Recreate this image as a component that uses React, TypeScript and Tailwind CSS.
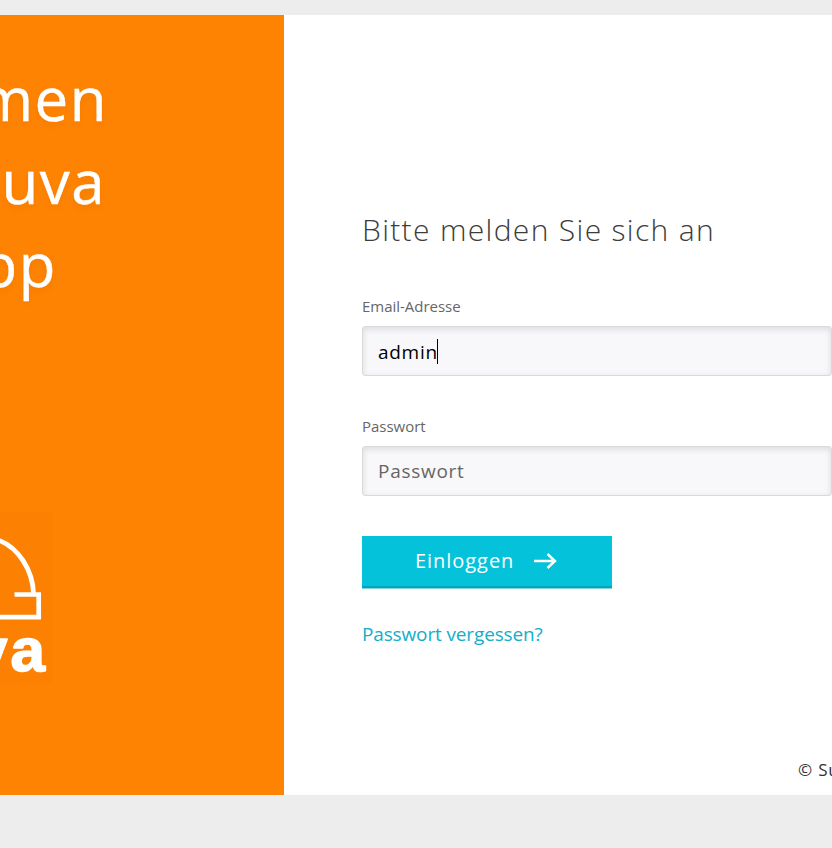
import React from "react";

const headline = [
  { text: "men", pad: "pr-[176px]" },
  { text: "uva", pad: "pr-[178px]" },
  { text: "pp", pad: "pr-[227px]" },
];

function Logo() {
  return (
    <div className="mt-[206px] h-[172px] w-[53px] overflow-hidden bg-[#fc8002]">
      <svg width="53" height="172" viewBox="0 512 53 172" fill="none" stroke="#fff" className="block">
        <path d="M-2 540C18 547 33 570 33.5 594" strokeWidth="4.8" />
        <path d="M14.5 594.5H38.7V617.2H-2" strokeWidth="4.7" />
        <g
          fill="#fff"
          strokeWidth="1.6"
          strokeLinejoin="round"
          fontSize="62"
          fontWeight="700"
          fontFamily="'Liberation Sans', Arial, sans-serif"
        >
          <text x="-27" y="671">v</text>
          <text x="10.5" y="671">a</text>
        </g>
      </svg>
    </div>
  );
}

function Field({ label, value, active }: { label: string; value: string; active?: boolean }) {
  return (
    <div className="flex flex-col">
      <label className="h-5 text-[15px] leading-5 tracking-[-0.02px] whitespace-nowrap text-[#666]">{label}</label>
      <div
        className={
          "mt-[10px] flex h-[50px] w-[470px] items-center rounded-[3px] border border-[#dadada] bg-[#f8f8fb] pl-[15px] text-[19px] tracking-[0.72px] shadow-[inset_0_2px_6px_rgba(0,0,0,0.12)] " +
          (active ? "text-black" : "text-[#666]")
        }
      >
        <span className={active ? "pt-[2px]" : "pt-px"}>{value}</span>
        {active && <span className="-ml-px h-[25px] w-px bg-black" />}
      </div>
    </div>
  );
}

export default function App() {
  return (
    <div className="h-[848px] w-[832px] overflow-hidden bg-[#ededed] pt-[15px] font-['Open_Sans',sans-serif]">
      <div className="flex h-[780px] bg-white">
        <section className="h-full w-[284px] shrink-0 overflow-hidden bg-[#ff8303] pt-[42px]">
          <h1 className="text-[60px] leading-[83px] tracking-[1.5px] text-white [-webkit-text-stroke:0.4px_white] [text-shadow:0_4px_6px_rgba(0,0,0,0.05)]">
            {headline.map((line) => (
              <span key={line.text} className={"flex h-[83px] justify-end " + line.pad}>
                {line.text}
              </span>
            ))}
          </h1>
          <Logo />
        </section>
        <main className="flex w-[548px] flex-col overflow-hidden pt-[192px] pl-[78px]">
          <h2 className="h-[46px] text-[30px] leading-[46px] font-light tracking-[1.33px] whitespace-nowrap text-[#3c3c3c]">
            Bitte melden Sie sich an
          </h2>
          <div className="mt-[43px] flex flex-col gap-[40px]">
            <Field label="Email-Adresse" value="admin" active />
            <Field label="Passwort" value="Passwort" />
          </div>
          <button className="mt-[40px] flex h-[52px] w-[250px] shrink-0 items-center border-b-2 border-[#04a6b9] bg-[#03c2da] pl-[53px] text-[20px] tracking-[0.95px] text-white shadow-[0_0.5px_0_#04a6b9]">
            <span>Einloggen</span>
            <svg className="-mt-px ml-[20px]" width="24" height="18" viewBox="0 0 24 18" fill="none" stroke="currentColor" strokeWidth="2.4">
              <path d="M0 9H21.5M13.5 2L21 9L13.5 16" />
            </svg>
          </button>
          <a className="mt-[32px] h-[28px] text-[19px] leading-[28px] tracking-[-0.14px] whitespace-nowrap text-[#13aec8]">
            Passwort vergessen?
          </a>
          <footer className="mt-[109px] pl-[436px] text-[17px] leading-[26px] tracking-[0.8px] whitespace-nowrap text-[#333]">
            © Su
          </footer>
        </main>
      </div>
    </div>
  );
}
